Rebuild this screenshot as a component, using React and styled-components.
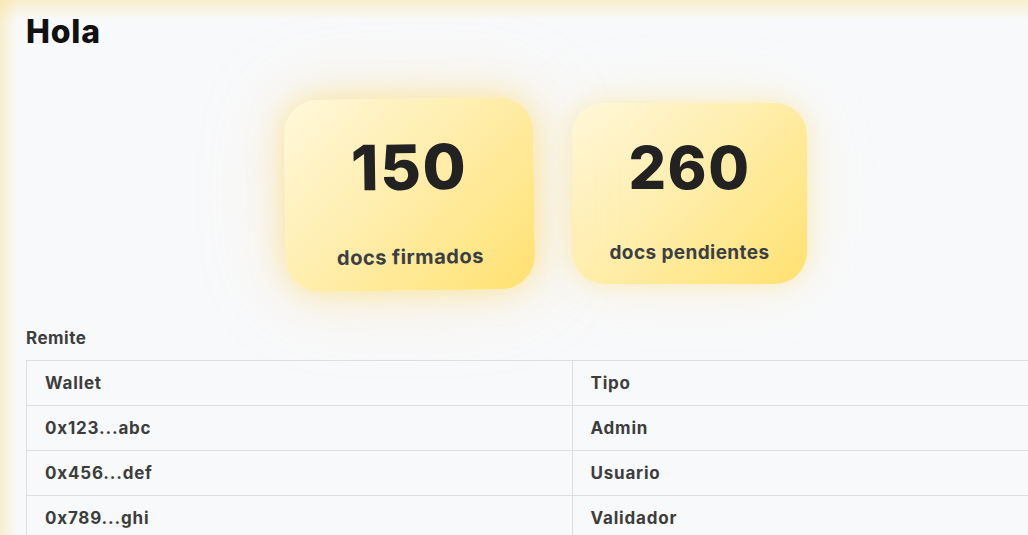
import styled, { createGlobalStyle } from 'styled-components';

const GlobalStyle = createGlobalStyle`
  html, body {
    margin: 0;
    padding: 0;
    background: #f8f9fb;
  }
  * {
    box-sizing: border-box;
  }
`;

const stats = [
  { value: 150, label: 'docs firmados', active: true },
  { value: 260, label: 'docs pendientes' },
];

const rows = [
  { wallet: '0x123...abc', tipo: 'Admin' },
  { wallet: '0x456...def', tipo: 'Usuario' },
  { wallet: '0x789...ghi', tipo: 'Validador' },
];

export default function App() {
  return (
    <>
      <GlobalStyle />
      <Page>
        <Title>Hola</Title>
        <CardsRow>
          {stats.map((s) => (
            <StatCard key={s.label} $active={s.active}>
              <Number>{s.value}</Number>
              <Label>{s.label}</Label>
            </StatCard>
          ))}
        </CardsRow>
        <Section>
          <SectionTitle>Remite</SectionTitle>
          <Table>
            <thead>
              <tr>
                <Th>Wallet</Th>
                <Th>Tipo</Th>
              </tr>
            </thead>
            <tbody>
              {rows.map((r) => (
                <tr key={r.wallet}>
                  <Td>{r.wallet}</Td>
                  <Td>{r.tipo}</Td>
                </tr>
              ))}
            </tbody>
          </Table>
        </Section>
      </Page>
    </>
  );
}

const Page = styled.div`
  min-height: 535px;
  width: 1028px;
  overflow: hidden;
  padding: 12px 0 0 26px;
  font-family: Inter, 'Liberation Sans', sans-serif;
  background:
    linear-gradient(to right, rgba(250, 228, 160, 0.55), rgba(250, 228, 160, 0) 18px),
    linear-gradient(to bottom, rgba(250, 228, 160, 0.5), rgba(250, 228, 160, 0) 20px),
    #f8f9fb;
`;

const Title = styled.h1`
  margin: 0;
  font-size: 32px;
  line-height: 40px;
  font-weight: 800;
  color: #111;
  letter-spacing: 0.8px;
`;

const CardsRow = styled.div`
  display: flex;
  gap: 45px;
  padding-left: 266px;
  margin-top: 51px;
`;

const StatCard = styled.div`
  width: 235px;
  height: 181px;
  border-radius: 32px;
  display: flex;
  flex-direction: column;
  align-items: center;
  justify-content: space-between;
  padding: 30px 0 20px;
  background: linear-gradient(135deg, #fff8dc 0%, #ffeda8 50%, #ffe170 100%);
  box-shadow: 0 0 24px rgba(255, 214, 80, 0.35), 0 0 70px rgba(255, 225, 130, 0.18);
  transform: ${(p) => (p.$active ? 'scale(1.06) rotate(-0.8deg) translateY(1px)' : 'none')};
  ${(p) =>
    p.$active &&
    `box-shadow: 0 0 30px rgba(255, 210, 70, 0.5), 0 0 80px rgba(255, 220, 120, 0.25);`}
`;

const Number = styled.div`
  font-size: 59px;
  line-height: 70px;
  font-weight: 800;
  color: #222;
  letter-spacing: 1.5px;
`;

const Label = styled.div`
  font-size: 19px;
  font-weight: 700;
  color: #3b3f45;
  letter-spacing: 0.4px;
`;

const Section = styled.div`
  margin-top: 44px;
`;

const SectionTitle = styled.div`
  font-size: 17px;
  font-weight: 700;
  color: #3d3d3d;
  letter-spacing: 0.5px;
  margin-bottom: 12px;
`;

const Table = styled.table`
  border-collapse: collapse;
  width: 1092px;
  table-layout: fixed;
`;

const cell = `
  height: 45px;
  padding: 0 18px;
  border: 1px solid #dcdee2;
  font-size: 17px;
  font-weight: 700;
  letter-spacing: 0.8px;
  color: #3d3d3d;
  text-align: left;
  vertical-align: middle;
`;

const Th = styled.th`
  ${cell}
`;

const Td = styled.td`
  ${cell}
`;
